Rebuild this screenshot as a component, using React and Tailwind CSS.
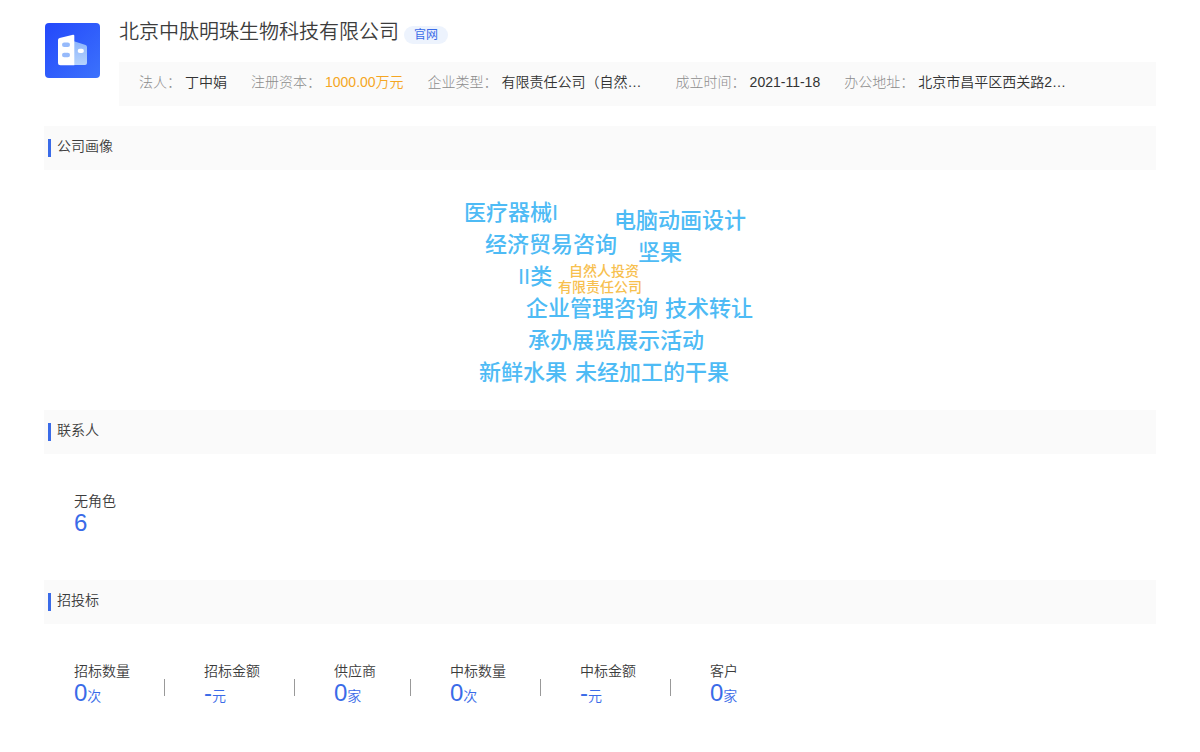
import React from "react";

const info = [
  { label: "法人：", value: "丁中娟" },
  { label: "注册资本：", value: "1000.00万元", highlight: true },
  { label: "企业类型：", value: "有限责任公司（自然…", wide: true },
  { label: "成立时间：", value: "2021-11-18" },
  { label: "办公地址：", value: "北京市昌平区西关路2…", wide: true },
];

const words = [
  { text: "医疗器械I", place: "left-[14px] top-[27px]" },
  { text: "电脑动画设计", place: "left-[164px] top-[35px]" },
  { text: "经济贸易咨询", place: "left-[35px] top-[59px]" },
  { text: "坚果", place: "left-[188px] top-[67px]" },
  { text: "II类", place: "left-[68px] top-[91px]" },
  { text: "自然人投资", place: "left-[119px] top-[93px]", small: true },
  { text: "有限责任公司", place: "left-[108px] top-[109px]", small: true },
  { text: "企业管理咨询", place: "left-[76px] top-[123px]" },
  { text: "技术转让", place: "left-[215px] top-[123px]" },
  { text: "承办展览展示活动", place: "left-[78px] top-[155px]" },
  { text: "新鲜水果", place: "left-[29px] top-[187px]" },
  { text: "未经加工的干果", place: "left-[125px] top-[187px]" },
];

const bids = [
  { label: "招标数量", value: "0", unit: "次" },
  { label: "招标金额", value: "-", unit: "元" },
  { label: "供应商", value: "0", unit: "家" },
  { label: "中标数量", value: "0", unit: "次" },
  { label: "中标金额", value: "-", unit: "元" },
  { label: "客户", value: "0", unit: "家" },
];

function CompanyLogo() {
  return (
    <svg viewBox="0 0 55 55" className="mt-px size-[55px] shrink-0" aria-hidden="true">
      <defs>
        <linearGradient id="tile" x1="0" y1="0" x2="1" y2="1">
          <stop offset="0" stopColor="#2348fb" />
          <stop offset="1" stopColor="#3c72fc" />
        </linearGradient>
        <linearGradient id="wing" x1="0" y1="0" x2="0" y2="1">
          <stop offset="0" stopColor="#8db5fb" />
          <stop offset="1" stopColor="#b5d3fd" />
        </linearGradient>
      </defs>
      <rect width="55" height="55" rx="4" fill="url(#tile)" />
      <path d="M29 18.2 40.6 22Q42 22.5 42 24V40Q42 42 40 42H29Z" fill="url(#wing)" />
      <path d="M14.6 15 28 11.7Q29.3 11.5 29.3 12.8V42.3H15.5Q13 42.3 13 39.8V17Q13 15.4 14.6 15Z" fill="#fff" />
      <rect x="17" y="19.5" width="8" height="4.4" rx="2.2" fill="#96bafb" />
      <rect x="17" y="29.8" width="8" height="4.4" rx="2.2" fill="#96bafb" />
      <rect x="32.7" y="25.8" width="6.2" height="4.2" rx="2.1" fill="#fff" />
    </svg>
  );
}

function SectionTitle({ children }) {
  return (
    <div className="flex h-11 items-center bg-[#fafafa] pl-1">
      <span className="mr-1.5 h-[18px] w-[3px] bg-[#3a6be8]" />
      <h2 className="pb-1 text-sm leading-5">{children}</h2>
    </div>
  );
}

function Stat({ label, value, unit }) {
  return (
    <div>
      <dt className="text-sm leading-5">{label}</dt>
      <dd className="text-2xl leading-6 text-[#3a6be8]">
        {value}
        {unit && <span className="text-sm leading-6">{unit}</span>}
      </dd>
    </div>
  );
}

export default function App() {
  return (
    <main
      lang="zh-CN"
      className="bg-white px-11 pb-8 pt-[22px] font-['Liberation_Sans','Noto_Sans_CJK_SC',sans-serif] font-[350] text-[#3c3c3c]"
    >
      <header className="flex gap-[19px] pl-px">
        <CompanyLogo />
        <div className="min-w-0 grow">
          <div className="-mt-1 flex h-7 items-center gap-[5px]">
            <h1 className="text-xl leading-7">北京中肽明珠生物科技有限公司</h1>
            <a href="#site" className="mt-1.5 rounded-full bg-[#edf3fd] px-2.5 text-xs leading-[18px] font-normal text-[#3a6be8]">
              官网
            </a>
          </div>
          <dl className="mt-4 flex h-11 items-center gap-6 bg-[#fafafa] px-5 pb-1 text-sm leading-5">
            {info.map(({ label, value, highlight, wide }) => (
              <div key={label} className="flex shrink-0 gap-1">
                <dt className="font-light text-[#8c8c8c]">{label}</dt>
                <dd className={highlight ? "text-[#f5a623]" : wide ? "w-[150px] text-[#333]" : "text-[#333]"}>
                  {value}
                </dd>
              </div>
            ))}
          </dl>
        </div>
      </header>

      <section className="mt-5">
        <SectionTitle>公司画像</SectionTitle>
        <div className="relative mx-auto h-60 w-[300px] whitespace-nowrap font-medium">
          {words.map(({ text, place, small }) => (
            <span
              key={text}
              className={`absolute ${place} ${small ? "text-sm leading-4 text-[#f7c04f]" : "text-[22px] leading-8 text-[#4ebbf5]"}`}
            >
              {text}
            </span>
          ))}
        </div>
      </section>

      <section>
        <SectionTitle>联系人</SectionTitle>
        <dl className="px-[30px] pb-[45px] pt-[37px]">
          <Stat label="无角色" value="6" />
        </dl>
      </section>

      <section>
        <SectionTitle>招投标</SectionTitle>
        <div className="flex px-[30px] pt-[37px]">
          {bids.map((bid, i) => (
            <React.Fragment key={bid.label}>
              {i > 0 && <span className="ml-[34px] mr-[39px] mt-[18px] h-[17px] w-px bg-[#999]" />}
              <dl>
                <Stat {...bid} />
              </dl>
            </React.Fragment>
          ))}
        </div>
      </section>
    </main>
  );
}
